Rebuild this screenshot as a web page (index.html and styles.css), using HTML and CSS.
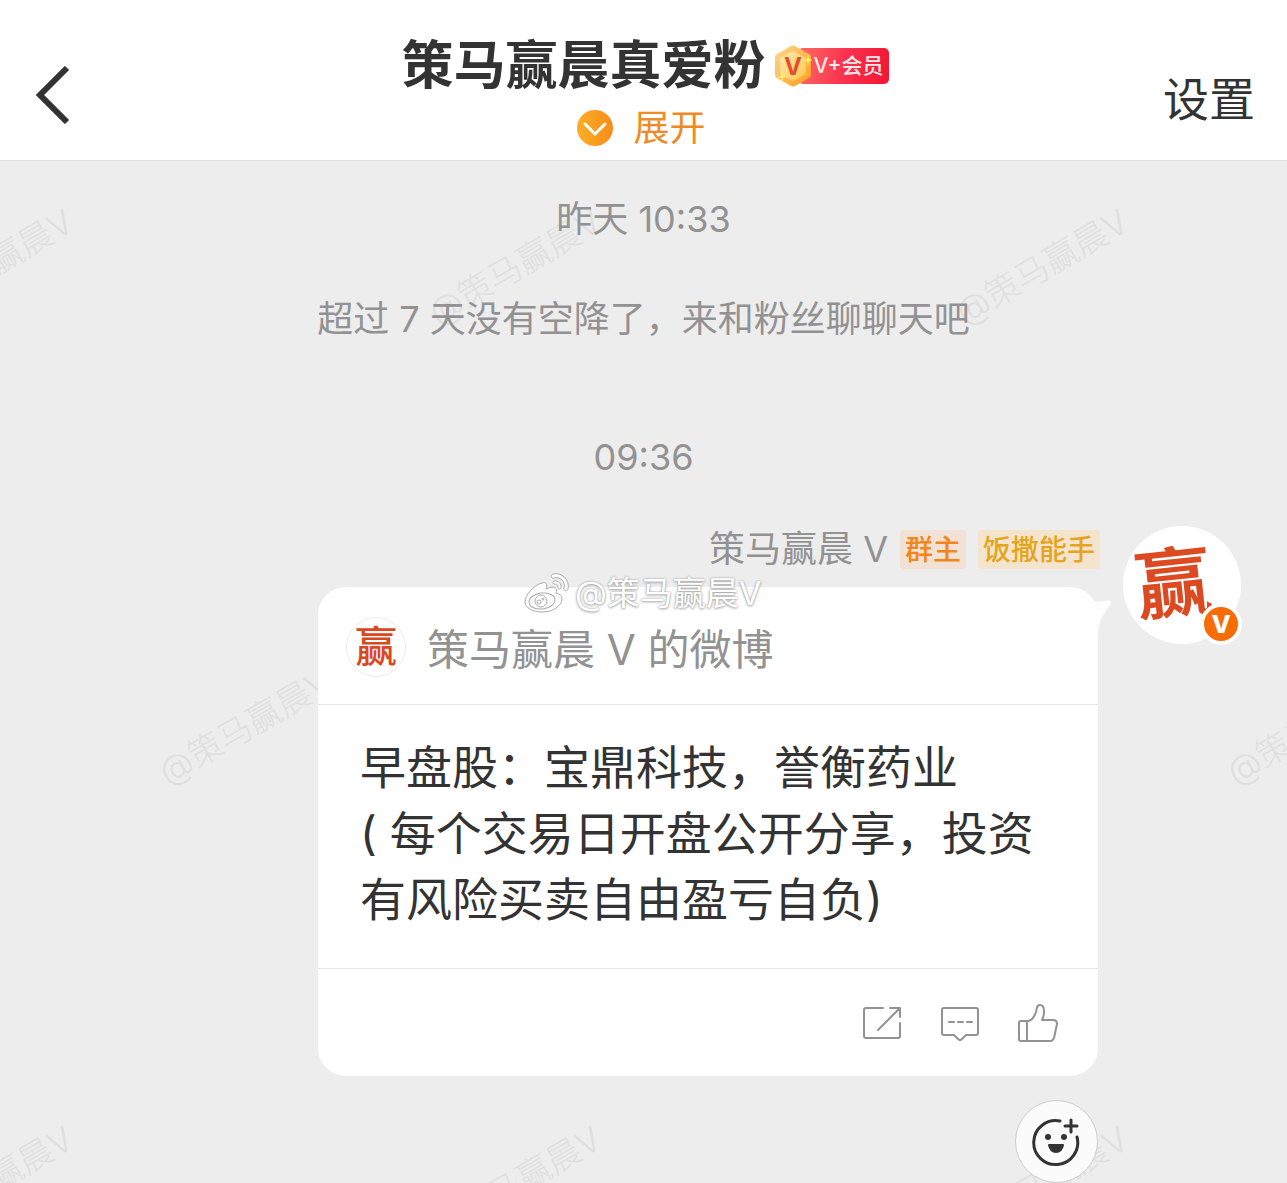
FILE: index.html
```html
<!DOCTYPE html>
<html lang="zh-CN">
<head>
    <meta charset="UTF-8">
    <meta name="viewport" content="width=device-width, initial-scale=1.0">
    <title>策马赢晨真爱粉</title>
    <link rel="stylesheet" href="styles.css">
</head>
<body>
    <header class="header">
        <button type="button" class="back" aria-label="返回">
            <svg width="34" height="58" viewBox="0 0 34 58" fill="none" stroke="#333" stroke-width="6">
                <path d="M31 2 4 29l27 27"/>
            </svg>
        </button>
        <div class="header-center">
            <div class="title-row">
                <h1>策马赢晨真爱粉</h1>
                <span class="vip">
                    <svg class="vip-icon" width="38" height="42" viewBox="0 0 38 42">
                        <defs>
                            <linearGradient id="gold" x1="0" y1="0" x2="1" y2="1">
                                <stop offset="0" stop-color="#ffd98a"/>
                                <stop offset="1" stop-color="#ff9c1c"/>
                            </linearGradient>
                            <linearGradient id="face" x1="0" y1="0" x2="1" y2="1">
                                <stop offset="0" stop-color="#ffe9b4"/>
                                <stop offset="1" stop-color="#ffc64d"/>
                            </linearGradient>
                        </defs>
                        <path d="M17 1q2-1 4 0l14 8q2 1 2 3v18q0 2-2 3l-14 8q-2 1-4 0L3 33q-2-1-2-3V12q0-2 2-3z" fill="url(#gold)"/>
                        <path d="M19 6l13 7v16l-13 7-13-7V13z" fill="url(#face)"/>
                        <text x="19" y="30" class="vip-v">V</text>
                        <path d="M34 9l1 5 4 1-4 1-1 5-1-5-4-1 4-1zM8 26l1 5 4 1-4 1-1 5-1-5-4-1 4-1z" fill="#fff36b"/>
                    </svg>
                    <span class="vip-label">V+会员</span>
                </span>
            </div>
            <button type="button" class="expand">
                <svg width="36" height="36" viewBox="0 0 36 36" fill="none">
                    <defs>
                        <linearGradient id="orange" x1="0" y1="0" x2="1" y2="0">
                            <stop offset="0" stop-color="#fbae25"/>
                            <stop offset="1" stop-color="#f68d1b"/>
                        </linearGradient>
                    </defs>
                    <circle cx="18" cy="18" r="18" fill="url(#orange)"/>
                    <path d="M8 14l10 10 10-10" stroke="#fff" stroke-width="3" stroke-linecap="round"/>
                </svg>
                展开
            </button>
        </div>
        <button type="button" class="settings">设置</button>
    </header>

    <main class="chat">
        <!-- 背景水印 -->
        <div class="watermarks" aria-hidden="true">
            <span class="mark row-1 col-1">@策马赢晨V</span>
            <span class="mark row-1 col-3">@策马赢晨V</span>
            <span class="mark row-1 col-5">@策马赢晨V</span>
            <span class="mark row-2 col-2">@策马赢晨V</span>
            <span class="mark row-2 col-6">@策马赢晨V</span>
            <span class="mark row-3 col-1">@策马赢晨V</span>
            <span class="mark row-3 col-3">@策马赢晨V</span>
            <span class="mark row-3 col-5">@策马赢晨V</span>
        </div>

        <p class="time">昨天 10:33</p>
        <p class="notice">超过 7 天没有空降了，来和粉丝聊聊天吧</p>
        <p class="time time-second">09:36</p>

        <!-- 消息 -->
        <section class="message">
            <div class="message-main">
                <div class="sender">
                    <span class="sender-name">策马赢晨 V</span>
                    <span class="tag tag-owner">群主</span>
                    <span class="tag tag-skill">饭撒能手</span>
                </div>
                <article class="bubble">
                    <svg class="tail" width="36" height="46" viewBox="0 0 36 46" fill="#fff">
                        <path d="M0 6 10 8q8 8 19 5 9-2 6 4-12 14-12 29H0z"/>
                    </svg>
                    <div class="signature">
                        <svg width="46" height="40" viewBox="0 0 46 40">
                            <g fill="#fff" stroke="#aaa" stroke-width="1">
                                <path d="M18 10c-8 2-17 12-17 19 0 6 8 10 17 10 12 0 20-7 20-13 0-4-3-5-6-6 2-5-1-8-10-4 2-5 0-7-4-6z"/>
                                <path d="M29 1c9-2 17 6 15 15-1 3-5 2-4-1 2-6-4-12-10-10-3 1-4-3-1-4z"/>
                                <path d="M30 8c4-1 8 3 7 7-1 2-4 1-3-1 0-2-1-3-3-3s-3-2-1-3z"/>
                                <ellipse cx="18" cy="28" rx="13" ry="8" transform="rotate(-7 18 28)"/>
                                <circle cx="17" cy="28" r="6"/>
                                <circle cx="15" cy="29" r="2"/>
                                <circle cx="19" cy="26" r="1"/>
                            </g>
                        </svg>
                        <span>@策马赢晨V</span>
                    </div>
                    <div class="bubble-head">
                        <span class="avatar-small">赢</span>
                        <span>策马赢晨 V 的微博</span>
                    </div>
                    <p class="bubble-text">早盘股：宝鼎科技，誉衡药业<br>( 每个交易日开盘公开分享，投资<br>有风险买卖自由盈亏自负)</p>
                    <div class="actions">
                        <button type="button" aria-label="转发">
                            <svg width="40" height="40" viewBox="0 0 40 40">
                                <path d="M21 5H4q-2 0-2 2v26q0 2 2 2h32q2 0 2-2V20M28 5h10v9M37 6 16 27"/>
                            </svg>
                        </button>
                        <button type="button" aria-label="评论">
                            <svg width="40" height="40" viewBox="0 0 40 40">
                                <path d="M4 5h32q2 0 2 2v23q0 2-2 2H26l-4 4q-2 2-4 0l-4-4H4q-2 0-2-2V7q0-2 2-2zM9 19h5M18 19h5M27 19h5"/>
                            </svg>
                        </button>
                        <button type="button" aria-label="赞">
                            <svg width="40" height="40" viewBox="0 0 40 40">
                                <path d="M9 18H3q-2 0-2 2v16q0 2 2 2h29q3 0 4-3l3-14q0-4-4-4H24c3-6 3-15-2-15-4 0-3 4-4 7-2 6-5 9-9 9zM9 18v20"/>
                            </svg>
                        </button>
                    </div>
                </article>
                <button type="button" class="react" aria-label="添加表情">
                    <svg width="50" height="50" viewBox="0 0 50 50" fill="none" stroke="#333" stroke-width="3" stroke-linecap="round">
                        <path d="M28 4A22 22 0 1 0 45 20M39 3v12M33 9h12"/>
                        <circle cx="16" cy="20" r="3" fill="#333" stroke="none"/>
                        <circle cx="32" cy="20" r="3" fill="#333" stroke="none"/>
                        <path d="M17 27h14q1 0 1 1c-1 5-4 8-8 8s-7-3-8-8q0-1 1-1z" fill="#333" stroke="none"/>
                    </svg>
                </button>
            </div>
            <div class="avatar">
                <span class="avatar-char">赢</span>
                <span class="verified">V</span>
            </div>
        </section>
    </main>
</body>
</html>
```

FILE: styles.css
```css
* {
    box-sizing: border-box;
}
body {
    margin: 0;
    min-height: 100vh;
    display: flex;
    flex-direction: column;
    font-family: Inter, "Noto Sans CJK SC", sans-serif;
    background-color: #ededed;
    color: #333;
}
h1, p {
    margin: 0;
}
button {
    padding: 0;
    border: none;
    background: none;
    font-family: inherit;
    color: inherit;
    cursor: pointer;
}
svg {
    display: block;
    flex-shrink: 0;
}

/* Cabecera */
.header {
    display: grid;
    grid-template-columns: 1fr auto 1fr;
    align-items: center;
    padding: 36px 32px 6px 36px;
    background-color: #fff;
    border-bottom: 1px solid #e2e2e2;
}
.back {
    justify-self: start;
}
.settings {
    justify-self: end;
    padding-top: 8px;
    font-size: 46px;
    line-height: 56px;
}
.title-row {
    display: flex;
    align-items: center;
    gap: 8px;
}
h1 {
    font-size: 52px;
    line-height: 60px;
    font-weight: 700;
}
.vip {
    display: flex;
    align-items: center;
}
.vip-icon {
    position: relative;
}
.vip-v {
    font-size: 24px;
    font-weight: 700;
    text-anchor: middle;
    fill: #e2512a;
}
.vip-label {
    margin-left: -14px;
    padding: 0 6px 0 16px;
    border-radius: 5px;
    background: linear-gradient(100deg, #ff6b62, #fa3350 50%, #f21530);
    color: #ffe9ea;
    font-size: 21px;
    line-height: 36px;
    font-weight: 500;
}
.expand {
    display: flex;
    align-items: center;
    justify-content: center;
    gap: 20px;
    width: 100%;
    padding: 6px 8px 0 0;
    font-size: 36px;
    line-height: 52px;
    color: #f08a24;
}

/* Chat */
.chat {
    position: relative;
    flex: 1;
    padding: 34px 46px 0;
    overflow: hidden;
}
.time, .notice {
    position: relative;
    font-size: 36px;
    line-height: 48px;
    text-align: center;
    color: #929292;
}
.notice {
    margin-top: 52px;
}
.time-second {
    margin-top: 90px;
}
.watermarks {
    position: absolute;
    inset: 0;
}
.mark {
    position: absolute;
    width: 200px;
    margin-left: -100px;
    font-size: 34px;
    line-height: 40px;
    font-weight: 300;
    white-space: nowrap;
    text-align: center;
    color: #dfdfdf;
    transform: rotate(-30deg);
}
.row-1 { top: 86px; }
.row-2 { top: 546px; }
.row-3 { top: 1003px; }
.col-1 { left: -1%; }
.col-2 { left: 19%; }
.col-3 { left: 40%; }
.col-5 { left: 81%; }
.col-6 { left: 102%; }

/* Mensaje */
.message {
    position: relative;
    display: flex;
    justify-content: flex-end;
    gap: 25px;
    margin-top: 45px;
}
.message-main {
    flex: 1;
    max-width: 780px;
    padding-top: 4px;
}
.sender {
    display: flex;
    align-items: center;
    justify-content: flex-end;
    gap: 12px;
    margin: 0 -2px 18px 0;
    line-height: 39px;
}
.sender-name {
    font-size: 36px;
    color: #929292;
}
.tag {
    padding: 2px 5px 0;
    border-radius: 4px;
    font-size: 28px;
    line-height: 37px;
    font-weight: 500;
}
.tag-owner {
    background-color: #f1e2d5;
    color: #f38519;
}
.tag-skill {
    background-color: #f3e4cb;
    color: #e5a41c;
}
.bubble {
    position: relative;
    border-radius: 28px;
    background-color: #fff;
}
.tail {
    position: absolute;
    top: 1px;
    right: -13px;
}
.signature {
    position: absolute;
    top: -15px;
    left: 206px;
    display: flex;
    align-items: center;
    gap: 5px;
    font-size: 33px;
    line-height: 42px;
    color: #fff;
    text-shadow: 0 0 2px #999, 0 1px 3px #aaa;
}
.bubble-head {
    display: flex;
    align-items: center;
    gap: 21px;
    height: 118px;
    padding: 2px 28px 0;
    border-bottom: 1px solid #e5e5e5;
    font-size: 42px;
    color: #929292;
}
.avatar-small {
    display: flex;
    align-items: center;
    justify-content: center;
    width: 60px;
    height: 60px;
    border: 1px solid #ebebeb;
    border-radius: 50%;
    font-size: 42px;
    font-weight: 500;
    line-height: 58px;
    color: #d9481f;
}
.bubble-text {
    padding: 29px 42px 36px;
    border-bottom: 1px solid #e5e5e5;
    font-size: 46px;
    line-height: 66px;
}
.actions {
    display: flex;
    align-items: center;
    justify-content: flex-end;
    gap: 38px;
    height: 107px;
    padding-right: 40px;
}
.actions svg {
    fill: none;
    stroke: #929292;
    stroke-width: 2;
    stroke-linecap: round;
    stroke-linejoin: round;
}
.react {
    display: flex;
    align-items: center;
    justify-content: center;
    width: 83px;
    height: 83px;
    margin: 24px 0 0 auto;
    border: 1px solid #ccc;
    border-radius: 50%;
    background-color: #fbfbfb;
}
.avatar {
    position: relative;
    width: 118px;
    height: 118px;
    border-radius: 50%;
    background-color: #fff;
    text-align: center;
}
.avatar-char {
    display: block;
    padding-right: 18px;
    font-size: 76px;
    line-height: 112px;
    font-weight: 700;
    color: #dc4a22;
    transform: rotate(-6deg);
}
.verified {
    position: absolute;
    right: -1px;
    bottom: -1px;
    width: 42px;
    height: 42px;
    border: 4px solid #fff;
    border-radius: 50%;
    background-color: #f86c05;
    color: #fff;
    font-size: 25px;
    line-height: 34px;
    font-weight: 800;
}
```
